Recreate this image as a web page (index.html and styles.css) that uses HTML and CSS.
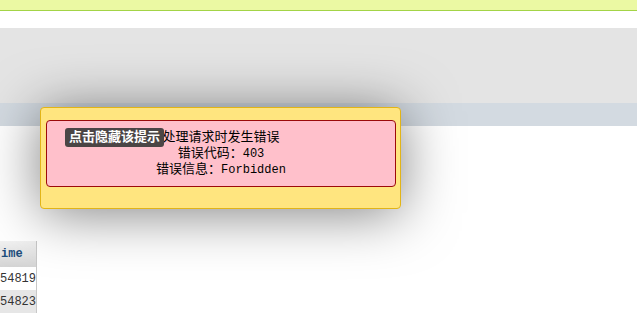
FILE: index.html
```html
<!DOCTYPE html>
<html lang="zh-CN">
<head>
  <meta charset="UTF-8" />
  <meta name="viewport" content="width=device-width, initial-scale=1.0" />
  <title>错误提示</title>
  <link rel="stylesheet" href="styles.css">
</head>
<body>
  <div class="notice-bar"></div>
  <div class="spacer"></div>
  <div class="header-band"></div>
  <div class="toolbar"></div>

  <div class="content">
    <table class="grid">
      <thead>
        <tr><th>ime</th></tr>
      </thead>
      <tbody>
        <tr><td>54819</td></tr>
        <tr class="alt"><td>54823</td></tr>
      </tbody>
    </table>
  </div>

  <div class="dialog">
    <div class="message">
      <span class="hide-tip">点击隐藏该提示</span>
      <div>处理请求时发生错误</div>
      <div>错误代码：<span class="code">403</span></div>
      <div>错误信息：<span class="code">Forbidden</span></div>
    </div>
  </div>
</body>
</html>
```

FILE: styles.css
```css
body {
  margin: 0;
  background: #fff;
  font-family: "Liberation Mono", "Noto Sans CJK SC", monospace;
  font-size: 13px;
  overflow: hidden;
}
.notice-bar {
  height: 10px;
  background: #ebf9a3;
  border-bottom: 1px solid #a3d446;
}
.spacer {
  height: 17px;
}
.header-band {
  height: 75px;
  background: #e4e4e4;
}
.toolbar {
  height: 23px;
  background: #d3dae1;
}
.content {
  padding-top: 115px;
}
.grid {
  border-collapse: collapse;
  font-size: 12px;
}
.grid th {
  width: 34px;
  height: 26px;
  padding: 0 0 0 1px;
  text-align: left;
  color: #1d4e7c;
  background: linear-gradient(#f2f2f2, #d4d4d4);
  border-right: 1px solid #c8c8c8;
}
.grid td {
  height: 23px;
  padding: 0;
  text-align: left;
  color: #333;
  border-right: 1px solid #c8c8c8;
}
.grid .alt td {
  background: #e6e6e6;
}
.dialog {
  position: absolute;
  left: 40px;
  top: 107px;
  width: 359px;
  height: 100px;
  background: #ffe57f;
  border: 1px solid #e2b417;
  border-radius: 4px;
  box-shadow: 0 4px 55px rgba(0,0,0,0.5);
}
.message {
  position: relative;
  margin: 12px 4px 0 5px;
  padding: 9px 0 8px;
  height: 48px;
  background: #ffc0cb;
  border: 1px solid #9b0a0a;
  border-radius: 4px;
  line-height: 16px;
  text-align: center;
  color: #000;
}
.code {
  font-size: 12px;
}
.hide-tip {
  position: absolute;
  left: 18px;
  top: 7px;
  height: 19px;
  padding: 0 4px;
  line-height: 19px;
  background: #4b4545;
  color: #fff;
  font-weight: bold;
  border-radius: 3px;
  white-space: nowrap;
}
```
